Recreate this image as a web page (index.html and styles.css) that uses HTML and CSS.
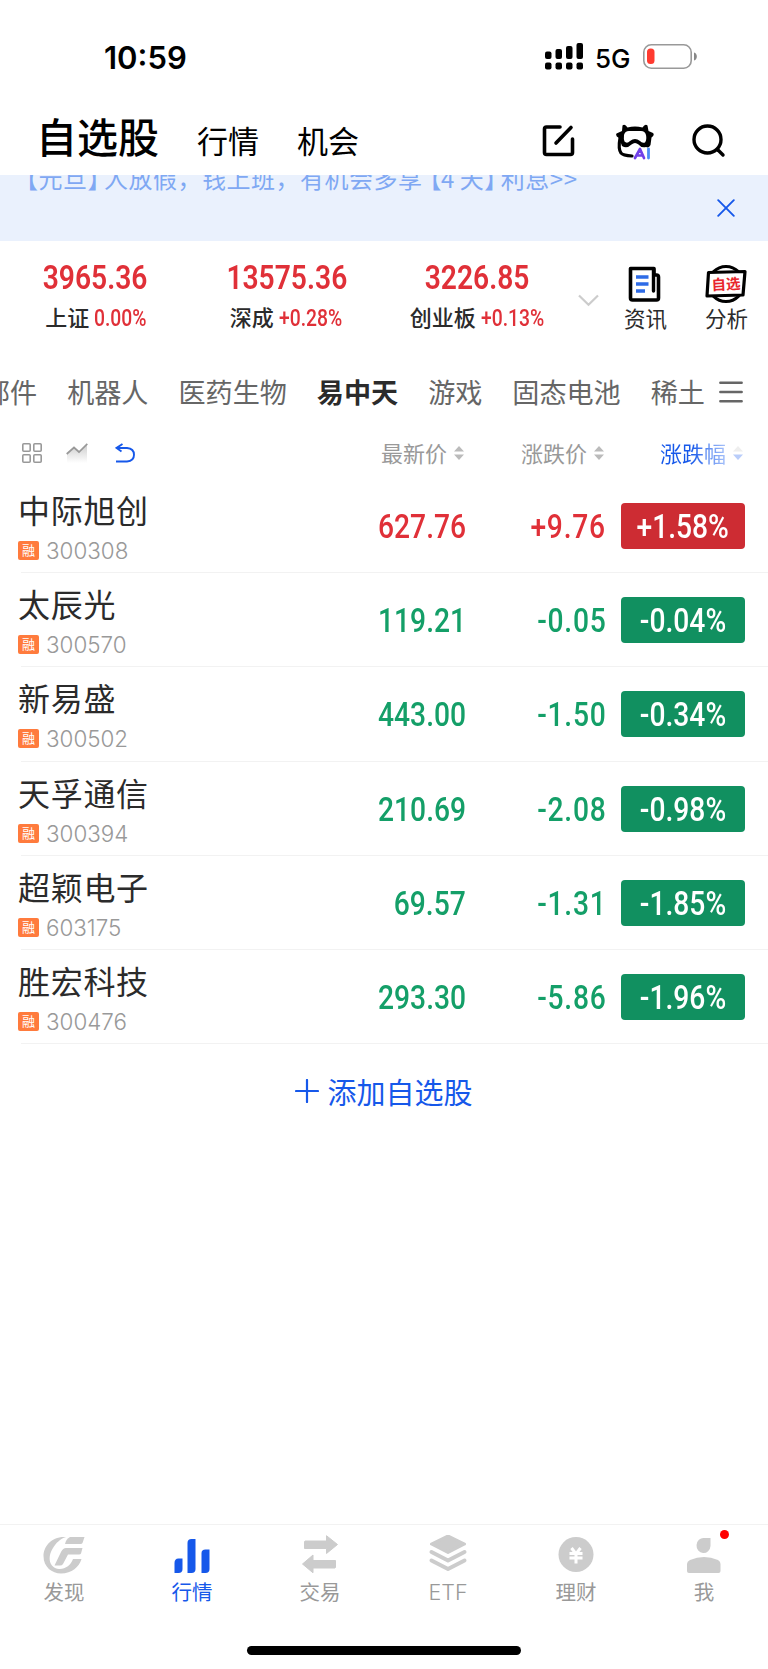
FILE: index.html
```html
<!DOCTYPE html>
<html lang="zh-CN">
<head>
    <meta charset="UTF-8">
    <meta name="viewport" content="width=device-width, initial-scale=1.0">
    <title>自选股</title>
    <link rel="stylesheet" href="styles.css">
</head>
<body>

    <div class="status-bar">
        <span class="time">10:59</span>
        <svg class="signal" width="38" height="27" viewBox="0 0 38 27">
            <rect x="0" y="8.5" width="6.5" height="7.5" rx="2"/>
            <rect x="10.5" y="6" width="6.5" height="10" rx="2"/>
            <rect x="21" y="3" width="6.5" height="13" rx="2"/>
            <rect x="31.5" y="0" width="6.5" height="16" rx="2"/>
            <rect x="0" y="19.5" width="6.5" height="7" rx="2"/>
            <rect x="10.5" y="19.5" width="6.5" height="7" rx="2"/>
            <rect x="21" y="19.5" width="6.5" height="7" rx="2"/>
            <rect x="31.5" y="19.5" width="6.5" height="7" rx="2"/>
        </svg>
        <span class="network">5G</span>
        <svg class="battery" width="55" height="25" viewBox="0 0 55 25">
            <rect x=".8" y=".8" width="47.4" height="23.4" rx="7.5" fill="none" stroke="#999" stroke-width="1.6"/>
            <path d="M51 8.5c3.8 1 3.8 7 0 8z" fill="#888"/>
            <rect x="4" y="4.5" width="7.5" height="15.5" rx="3.5" fill="#ff3b30"/>
        </svg>
    </div>

    <header class="header">
        <h1>自选股</h1>
        <a href="#" class="header-link">行情</a>
        <a href="#" class="header-link">机会</a>
        <div class="header-icons">
            <svg width="34" height="34" viewBox="0 0 34 34" fill="none" stroke="#000" stroke-width="3.6" stroke-linecap="round" stroke-linejoin="round">
                <path d="M18 3H4.5Q2.500 3 2.500 5V28.5Q2.500 30.5 4.500 30.5H28.5Q30.5 30.5 30.5 28.5V15"/>
                <path d="M29 3.5L14 19"/>
            </svg>
            <svg width="40" height="38" viewBox="0 0 40 38">
                <path d="M7 7L7.500 1.500Q10 -.5 12.500 3.500Q20 1.500 27.500 3.500Q30 -.5 32.500 1.500L33.500 7L38 9Q40 11 36.500 13.500L35.500 21Q34 24.500 31 23Q26 24 23.500 20.500Q20 17.500 16.500 20.500Q12 25 7 22L4 14Q0 12 1.500 9.500Z" fill="#000"/>
                <path d="M9 11Q10 7 14 7H26Q30 7 31 11Q32 16 30 18.500Q27 19.500 25 17Q20 13 15 17Q12 20 9.500 17.500Q8.500 15 9 11Z" fill="#fff"/>
                <path d="M5 14Q3 25 6 29Q8 31.5 17 32" fill="none" stroke="#000" stroke-width="3.2" stroke-linecap="round"/>
                <path d="M20 34L25 25L29 34M22 31.5H28" fill="none" stroke="#7140e8" stroke-width="2.7" stroke-linecap="round" stroke-linejoin="round"/>
                <path d="M33.5 24.800V34" fill="none" stroke="#4b8df5" stroke-width="2.8" stroke-linecap="round"/>
            </svg>
            <svg width="34" height="34" viewBox="0 0 34 34" fill="none" stroke="#000" stroke-width="3.4" stroke-linecap="round">
                <circle cx="15.5" cy="15.5" r="13.5"/>
                <path d="M26 26L31 31"/>
            </svg>
        </div>
    </header>

    <div class="notice">
        <p class="notice-text">【元旦<span class="tight">】</span>人放假，钱上班，有机会多享<span class="open">【</span><span class="four">4</span>天<span class="tight">】</span>利息&gt;&gt;</p>
        <svg class="close" width="18" height="18" viewBox="0 0 18 18" fill="none" stroke="#1658ea" stroke-width="1.9" stroke-linecap="round">
            <path d="M1.2 1.2L16.8 16.8M16.8 1.2L1.2 16.8"/>
        </svg>
    </div>

    <section class="indices">
        <div class="index">
            <div class="index-value"><span>3965.36</span></div>
            <div class="index-name">上证 <span>0.00%</span></div>
        </div>
        <div class="index">
            <div class="index-value"><span>13575.36</span></div>
            <div class="index-name">深成 <span>+0.28%</span></div>
        </div>
        <div class="index">
            <div class="index-value"><span>3226.85</span></div>
            <div class="index-name">创业板 <span>+0.13%</span></div>
        </div>
        <svg class="chevron" width="21" height="13" viewBox="0 0 21 13" fill="none" stroke="#ccc" stroke-width="2.2">
            <path d="M1 1.5L10.5 10.8L20 1.5"/>
        </svg>
        <div class="shortcut">
            <svg width="42" height="40" viewBox="0 0 42 40">
                <path d="M7 4.500H30V11H32.5Q34.5 11 34.5 13V34Q34.5 36 32.5 36H8.500Q6.500 36 6.500 34V4.500Z" fill="#fff" stroke="#000" stroke-width="3.6" stroke-linejoin="round"/>
                <path d="M29.5 5V27" stroke="#000" stroke-width="3.4" stroke-linecap="round"/>
                <path d="M12 13H24.5M12 20H24.5M12 27H21" stroke="#2e6be6" stroke-width="3.4"/>
            </svg>
            <span>资讯</span>
        </div>
        <div class="shortcut">
            <svg width="42" height="40" viewBox="0 0 42 40">
                <circle cx="21" cy="20" r="17.5" fill="#fff" stroke="#000" stroke-width="3"/>
                <path d="M3.500 8.500L40 7.500L38 31L2 32Z" fill="#fff" stroke="#000" stroke-width="3.2" stroke-linejoin="round"/>
                <text class="stamp" x="6.5" y="25.5" transform="rotate(-3 21 20)">自选</text>
            </svg>
            <span>分析</span>
        </div>
    </section>

    <nav class="groups">
        <div class="group-list">
            <a href="#">部件</a>
            <a href="#">机器人</a>
            <a href="#">医药生物</a>
            <a href="#" class="active">易中天</a>
            <a href="#">游戏</a>
            <a href="#">固态电池</a>
            <a href="#">稀土</a>
        </div>
        <svg class="menu" width="24" height="22" viewBox="0 0 24 22" stroke="#666" stroke-width="2.4" stroke-linecap="round">
            <path d="M1.3 1.7H22.7M1.3 11H22.7M1.3 20.2H22.7"/>
        </svg>
    </nav>

    <div class="columns">
        <svg class="tool" width="20" height="20" viewBox="0 0 20 20" fill="none" stroke="#999" stroke-width="1.6">
            <rect x=".8" y=".8" width="7.4" height="7.4" rx="1"/>
            <rect x="11.8" y=".8" width="7.4" height="7.4" rx="1"/>
            <rect x=".8" y="11.8" width="7.4" height="7.4" rx="1"/>
            <rect x="11.8" y="11.8" width="7.4" height="7.4" rx="1"/>
        </svg>
        <svg class="tool" width="22" height="20" viewBox="0 0 22 20">
            <defs>
                <linearGradient id="shade" x1="0" y1="0" x2="0" y2="1">
                    <stop offset="0" stop-color="#ccc"/>
                    <stop offset="1" stop-color="#fff"/>
                </linearGradient>
            </defs>
            <path d="M1 11L8 5L13 9L21 1V20H1Z" fill="url(#shade)"/>
            <path d="M.7 11L8 4.500L13 9L21.3 .8" fill="none" stroke="#999" stroke-width="1.7"/>
        </svg>
        <svg class="tool" width="21" height="20" viewBox="0 0 21 20" fill="none" stroke="#1658ea" stroke-width="1.9">
            <path d="M1 18.5H12Q19 18 19 11.800Q19 5.500 12 5H1.500M7.500 1L1.500 5L6.500 8.500"/>
        </svg>
        <div class="column price-col">最新价
            <svg width="10" height="14" viewBox="0 0 10 14" fill="#bbb"><path d="M0 5.5L5 0L10 5.5ZM0 8.5L5 14L10 8.5Z"/></svg>
        </div>
        <div class="column change-col">涨跌价
            <svg width="10" height="14" viewBox="0 0 10 14" fill="#bbb"><path d="M0 5.5L5 0L10 5.5ZM0 8.5L5 14L10 8.5Z"/></svg>
        </div>
        <div class="column rate-col"><span>涨跌幅</span>
            <svg width="10" height="14" viewBox="0 0 10 14"><path d="M0 5.5L5 0L10 5.5Z" fill="#eee"/><path d="M0 8.5L5 14L10 8.5Z" fill="#b9cdfa"/></svg>
        </div>
    </div>

    <main class="stocks">
        <div class="stock up">
            <div class="stock-info"><h2>中际旭创</h2><p><i>融</i>300308</p></div>
            <div class="price"><span>627.76</span></div>
            <div class="change"><span>+9.76</span></div>
            <div class="rate"><span>+1.58%</span></div>
        </div>
        <div class="stock">
            <div class="stock-info"><h2>太辰光</h2><p><i>融</i>300570</p></div>
            <div class="price"><span>119.21</span></div>
            <div class="change"><span>-0.05</span></div>
            <div class="rate"><span>-0.04%</span></div>
        </div>
        <div class="stock">
            <div class="stock-info"><h2>新易盛</h2><p><i>融</i>300502</p></div>
            <div class="price"><span>443.00</span></div>
            <div class="change"><span>-1.50</span></div>
            <div class="rate"><span>-0.34%</span></div>
        </div>
        <div class="stock">
            <div class="stock-info"><h2>天孚通信</h2><p><i>融</i>300394</p></div>
            <div class="price"><span>210.69</span></div>
            <div class="change"><span>-2.08</span></div>
            <div class="rate"><span>-0.98%</span></div>
        </div>
        <div class="stock">
            <div class="stock-info"><h2>超颖电子</h2><p><i>融</i>603175</p></div>
            <div class="price"><span>69.57</span></div>
            <div class="change"><span>-1.31</span></div>
            <div class="rate"><span>-1.85%</span></div>
        </div>
        <div class="stock">
            <div class="stock-info"><h2>胜宏科技</h2><p><i>融</i>300476</p></div>
            <div class="price"><span>293.30</span></div>
            <div class="change"><span>-5.86</span></div>
            <div class="rate"><span>-1.96%</span></div>
        </div>
    </main>

    <a href="#" class="add">
        <svg width="24" height="24" viewBox="0 0 24 24" stroke="#1658ea" stroke-width="2.2" stroke-linecap="round"><path d="M12 1V23M1 12H23"/></svg>
        添加自选股
    </a>

    <nav class="tabbar">
        <a href="#" class="tab">
            <svg width="42" height="40" viewBox="0 0 42 40" fill="#ccc">
                <path d="M23 2C8 1 .5 12 .5 21C.5 32 9 38.5 18 38.5C29 38.5 36 32 38.5 24H30C28 30 22 34.5 16 34C6 33 4 22 10 13C13 8 17 4 23 2Z"/>
                <path d="M27 2H41.5L39.5 8Q39 9 37.5 9H22Q23 4 27 2Z"/>
                <path d="M23 13H39.5L38 18.5Q37.5 19.5 36 19.5H25L20 29Q19 30.5 17 30.5H11.5L18 17Q20 13 23 13Z"/>
            </svg>
            发现
        </a>
        <a href="#" class="tab active">
            <svg width="42" height="40" viewBox="0 0 42 40" fill="#1658ea">
                <path d="M3.500 28Q3.500 23.5 7.500 23.5H11.5V34Q11.5 38 7.500 38H3.500Z"/>
                <path d="M16.5 8Q16.5 4 20.5 4H24.5V34Q24.5 38 20.5 38H16.5Z"/>
                <path d="M30.5 18Q30.5 14.5 34.5 14.5H38.5V34Q38.5 38 34.5 38H30.5Z"/>
            </svg>
            行情
        </a>
        <a href="#" class="tab">
            <svg width="42" height="40" viewBox="0 0 42 40" fill="#ccc" stroke="#ccc" stroke-width="1" stroke-linejoin="round">
                <path d="M6 6H27.5V.7L38.5 9.500L27.5 18.5V13.500H5.500V7Z"/>
                <path d="M36 33H14V37.8L3.500 29L14 20V25.5H36.5V32Z"/>
            </svg>
            交易
        </a>
        <a href="#" class="tab">
            <svg width="42" height="40" viewBox="0 0 42 40" fill="#ccc" stroke="#ccc" stroke-width="4" stroke-linejoin="round" stroke-linecap="round">
                <path d="M21 1L37.500 9L21 17.500L4.500 9Z" stroke-width="3"/>
                <path d="M4.500 17L21 25.5L37.500 17M4.500 25.5L21 34L37.500 25.5" fill="none"/>
            </svg>
            <span class="latin">ETF</span>
        </a>
        <a href="#" class="tab">
            <svg width="42" height="40" viewBox="0 0 42 40">
                <circle cx="21" cy="19.5" r="17.5" fill="#ccc"/>
                <path d="M16.5 13L21 19L25.5 13M14.5 18.5H27.5M14.5 23H27.5M21 18V28.5" fill="none" stroke="#fff" stroke-width="3"/>
            </svg>
            理财
        </a>
        <a href="#" class="tab">
            <svg width="42" height="40" viewBox="0 0 42 40" fill="#ccc">
                <path d="M21 3H27.500V11A7 7.500 0 1 1 21 3Z"/>
                <path d="M4 29Q4 26.5 7 25Q21 19 35 25Q37.500 26.5 37.500 29V36Q37.500 38 35.5 38H6Q4 38 4 36Z"/>
            </svg>
            我
            <b class="dot"></b>
        </a>
    </nav>
    <div class="home-bar"></div>

</body>
</html>
```
FILE: styles.css
```css
* {
    padding: 0;
    margin: 0;
    box-sizing: border-box;
}

body {
    width: 768px;
    height: 1669px;
    display: flex;
    flex-direction: column;
    background-color: #fff;
    color: #2b2b2b;
    font-family: "Noto Sans CJK SC", sans-serif;
    overflow: hidden;
}

a {
    color: inherit;
    text-decoration: none;
}

svg {
    display: block;
    flex-shrink: 0;
}

/* status bar */
.status-bar {
    height: 106px;
    display: flex;
    padding: 37px 0 0 104px;
    align-items: flex-start;
    font-family: Inter, sans-serif;
    color: #000;
}

.time {
    width: 441px;
    font-size: 31px;
    font-weight: 600;
    line-height: 41px;
}

.signal {
    margin-top: 6px;
}

.network {
    width: 60px;
    padding-left: 12px;
    font-size: 26px;
    font-weight: 500;
    line-height: 43px;
}

.battery {
    margin-top: 7px;
}

/* header */
.header {
    height: 69px;
    display: flex;
    padding-left: 36px;
    color: #000;
}

.header h1 {
    width: 161px;
    font-size: 41px;
    font-weight: 500;
    line-height: 59px;
}

.header-link {
    width: 100px;
    font-size: 31px;
    line-height: 68px;
}

.header-icons {
    display: flex;
    align-items: flex-start;
    padding: 18px 0 0 145px;
    gap: 39px;
}

.header-icons svg:last-child {
    margin-left: -2px;
}

/* notice */
.notice {
    height: 66px;
    background-color: #eaf1fd;
    display: flex;
    justify-content: space-between;
    overflow: hidden;
}

.notice-text {
    margin: -14px 0 0 14px;
    color: #7fa8f3;
    font-size: 24px;
    letter-spacing: .5px;
    line-height: 34px;
    white-space: nowrap;
}

.tight {
    margin-right: -8px;
}

.open {
    margin-left: -5px;
}

.four {
    margin: 0 5px 0 -1px;
}

.close {
    margin: 24px 33px 0 0;
}

/* indices */
.indices {
    height: 117px;
    display: flex;
    color: #2b2b2b;
}

.index {
    width: 191px;
    padding-top: 15px;
    text-align: center;
    white-space: nowrap;
}

.index-value {
    height: 42px;
    color: #e03038;
    font-family: Roboto, sans-serif;
    font-size: 34px;
    font-weight: 600;
    line-height: 43px;
}

.index-value span {
    display: inline-block;
    transform: scaleX(.83);
}

.index-name {
    font-size: 22px;
    font-weight: 500;
    line-height: 36px;
}

.index-name span {
    display: inline-block;
    margin-right: -11px;
    color: #e03038;
    font-family: Roboto, sans-serif;
    font-size: 23px;
    font-weight: 500;
    transform: scaleX(.84);
    transform-origin: left;
}

.chevron {
    margin: 53px 25px 0 5px;
}

.shortcut {
    width: 42px;
    margin-right: 39px;
    padding-top: 23px;
    font-size: 21.5px;
    line-height: 30px;
    white-space: nowrap;
}

.shortcut:last-child {
    margin-right: 0;
}

.shortcut span {
    display: block;
    margin-top: -1px;
}

.stamp {
    fill: #e8262d;
    font-size: 14.5px;
    font-weight: 700;
}

/* stock groups */
.groups {
    height: 67px;
    display: flex;
    align-items: center;
    overflow: hidden;
}

.group-list {
    width: 703px;
    display: flex;
    margin-left: -17px;
    gap: 30px;
    color: #666;
    font-size: 27.1px;
    line-height: 40px;
    white-space: nowrap;
}

.group-list .active {
    color: #2b2b2b;
    font-weight: 700;
}

.menu {
    margin-left: 33px;
}

/* list heading */
.columns {
    height: 54px;
    display: flex;
    padding: 18px 0 0 22px;
    color: #999;
    font-size: 22px;
    line-height: 20px;
}

.tool {
    margin-right: 24px;
}

.tool + .tool + .tool {
    margin-left: 3px;
}

.column {
    display: flex;
    align-items: center;
    gap: 7px;
    height: 32px;
    margin-top: -7px;
    white-space: nowrap;
}

.column svg {
    margin-top: 2px;
}

.price-col {
    margin-left: 221px;
    width: 140px;
}

.change-col {
    width: 139px;
}

.rate-col span {
    padding: 5px 0;
    background: linear-gradient(to right, #1658ea 30px, #a9c3fa 66px);
    background-clip: text;
    -webkit-background-clip: text;
    color: transparent;
}

/* stocks */
.stock {
    height: 94.2px;
    display: flex;
    position: relative;
    color: #149f68;
}

.stock::after {
    content: "";
    position: absolute;
    left: 21px;
    right: 0;
    bottom: 0;
    height: 1px;
    background-color: #f2f2f2;
}

.up {
    color: #e03038;
}

.stock-info {
    width: 325px;
    padding: 8px 0 0 18px;
}

.stock-info h2 {
    color: #2b2b2b;
    font-size: 32px;
    font-weight: 400;
    line-height: 44px;
    letter-spacing: .7px;
}

.stock-info p {
    display: flex;
    align-items: center;
    gap: 7px;
    margin-top: 5px;
    color: #999;
    font-family: Inter, sans-serif;
    font-size: 22.4px;
    font-weight: 300;
    line-height: 29px;
}

.stock-info i {
    width: 21px;
    height: 19px;
    border-radius: 2px;
    background-color: #ff7b3d;
    color: #fff;
    font-family: "Noto Sans CJK SC", sans-serif;
    font-size: 13px;
    font-style: normal;
    font-weight: 400;
    line-height: 18px;
    text-align: center;
}

.price,
.change,
.rate {
    font-family: Roboto, sans-serif;
    font-size: 34px;
    font-weight: 500;
    line-height: 46px;
    padding-top: 24px;
    text-align: right;
}

.price {
    width: 141px;
}

.change {
    width: 140px;
    letter-spacing: .9px;
}

.price span,
.change span {
    display: inline-block;
    transform: scaleX(.83);
    transform-origin: right;
}

.rate {
    width: 124px;
    height: 46px;
    margin: 24px 0 0 15px;
    padding-top: 0;
    border-radius: 4px;
    background-color: #119060;
    color: #fff;
    text-align: center;
}

.up .rate {
    background-color: #cd2c33;
}

.rate span {
    display: inline-block;
    transform: scaleX(.83);
}

.add {
    display: flex;
    justify-content: center;
    align-items: center;
    gap: 8px;
    height: 60px;
    margin-top: 17px;
    color: #1658ea;
    font-size: 29px;
}

/* bottom tabs */
.tabbar {
    height: 122px;
    display: flex;
    margin-top: auto;
    padding-top: 10px;
    border-top: 1px solid #f2f2f2;
    color: #999;
    flex-shrink: 0;
}

.tab {
    width: 128px;
    position: relative;
    display: flex;
    flex-direction: column;
    align-items: center;
    font-size: 20.5px;
    line-height: 32px;
}

.tabbar .active {
    color: #1658ea;
}

.latin {
    font-family: Inter, sans-serif;
    font-size: 21.5px;
    font-weight: 300;
    line-height: 34px;
}

.dot {
    position: absolute;
    top: -5px;
    left: 80px;
    width: 9px;
    height: 9px;
    border-radius: 50%;
    background-color: #f00;
}

.home-bar {
    width: 274px;
    height: 9px;
    margin: 0 auto 14px;
    border-radius: 5px;
    background-color: #000;
    flex-shrink: 0;
}
```
